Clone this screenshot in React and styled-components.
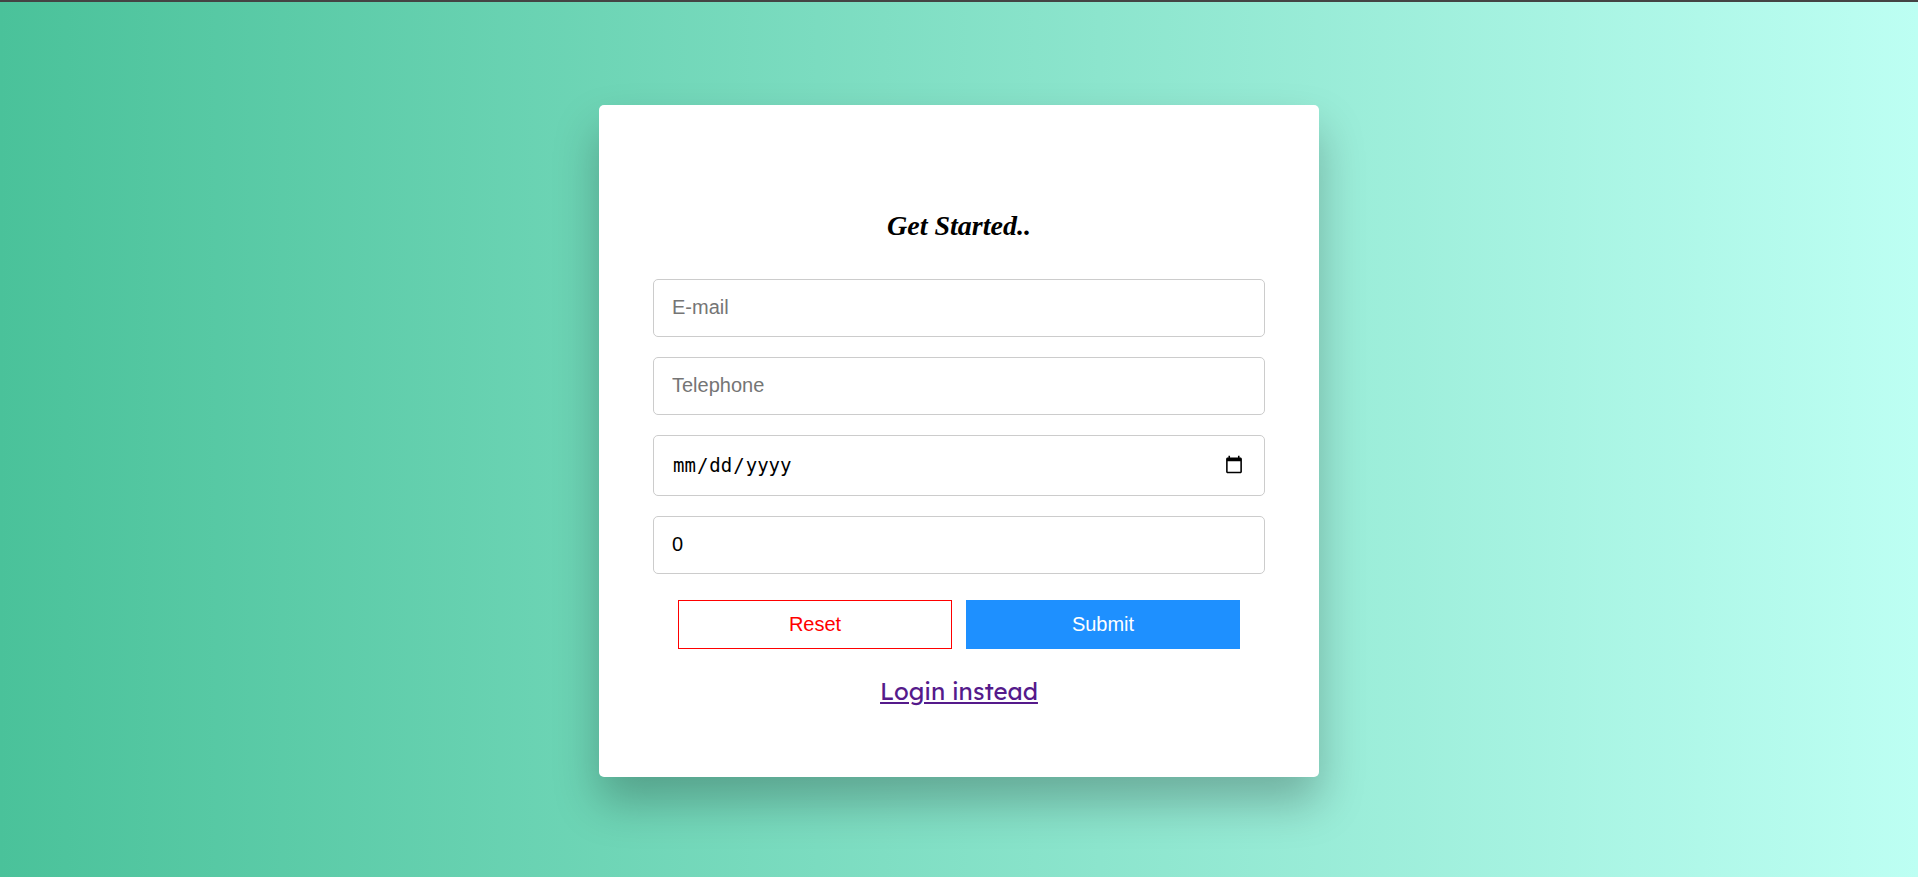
import React, { useState } from "react";
import styled, { createGlobalStyle } from "styled-components";

const GlobalStyle = createGlobalStyle`
  *, *::before, *::after { box-sizing: border-box; }
  body { margin: 0; }
`;

const Page = styled.main`
  min-height: 100vh;
  display: flex;
  align-items: center;
  justify-content: center;
  padding: 22px 16px 20px;
  border-top: 2px solid #444;
  background: linear-gradient(to right, #4ac29a, #bdfff3) border-box;
  font-family: "Liberation Sans", Arial, sans-serif;
`;

const Card = styled.form`
  width: 100%;
  max-width: 720px;
  display: flex;
  flex-direction: column;
  padding: 100px 54px 68px;
  border-radius: 5px;
  background: #fff;
  box-shadow: 0 25px 45px rgba(0, 0, 0, 0.25);
`;

const Title = styled.h1`
  margin: 0 0 32px;
  font-family: "Liberation Serif", cursive;
  font-size: 28px;
  font-style: italic;
  font-weight: 700;
  line-height: 42px;
  text-align: center;
  color: #000;
`;

const Fields = styled.div`
  display: grid;
  gap: 20px;
`;

const Field = styled.input`
  width: 100%;
  height: ${({ type }) => (type === "date" ? 61 : 58)}px;
  padding: 16px 18px;
  border: 1px solid #ccc;
  border-radius: 5px;
  background: #fff;
  color: #000;
  font-family: ${({ type }) =>
    type === "date" ? '"DejaVu Sans Mono", monospace' : "inherit"};
  font-size: ${({ type }) => (type === "date" ? 19 : 20)}px;

  &::placeholder { color: #757575; }
  &::-webkit-calendar-picker-indicator { width: 20px; height: 20px; }
`;

const Actions = styled.div`
  display: grid;
  grid-template-columns: 1fr 1fr;
  gap: 14px;
  margin: 26px 25px 24px;
`;

const Button = styled.button`
  height: 49px;
  padding: 0 16px;
  border: 1px solid ${({ $primary }) => ($primary ? "#1e90ff" : "#f00")};
  background: ${({ $primary }) => ($primary ? "#1e90ff" : "#fff")};
  color: ${({ $primary }) => ($primary ? "#fff" : "#f00")};
  font-family: inherit;
  font-size: 20px;
  cursor: pointer;
`;

const LoginLink = styled.a`
  align-self: center;
  color: #551a8b;
  font-family: Lexend, Inter, sans-serif;
  font-feature-settings: "cv11";
  font-size: 24px;
  line-height: 36px;
`;

export default function App() {
  const [count, setCount] = useState("0");

  return (
    <>
      <GlobalStyle />
      <Page>
        <Card onSubmit={(e) => e.preventDefault()} onReset={() => setCount("0")}>
          <Title>Get Started..</Title>
          <Fields>
            <Field type="email" name="email" placeholder="E-mail" aria-label="E-mail" />
            <Field type="tel" name="telephone" placeholder="Telephone" aria-label="Telephone" />
            <Field type="date" name="date" aria-label="Date" />
            <Field
              type="number"
              name="number"
              aria-label="Number"
              value={count}
              onChange={(e) => setCount(e.target.value)}
            />
          </Fields>
          <Actions>
            <Button type="reset">Reset</Button>
            <Button type="submit" $primary>Submit</Button>
          </Actions>
          <LoginLink href="#login">Login instead</LoginLink>
        </Card>
      </Page>
    </>
  );
}
